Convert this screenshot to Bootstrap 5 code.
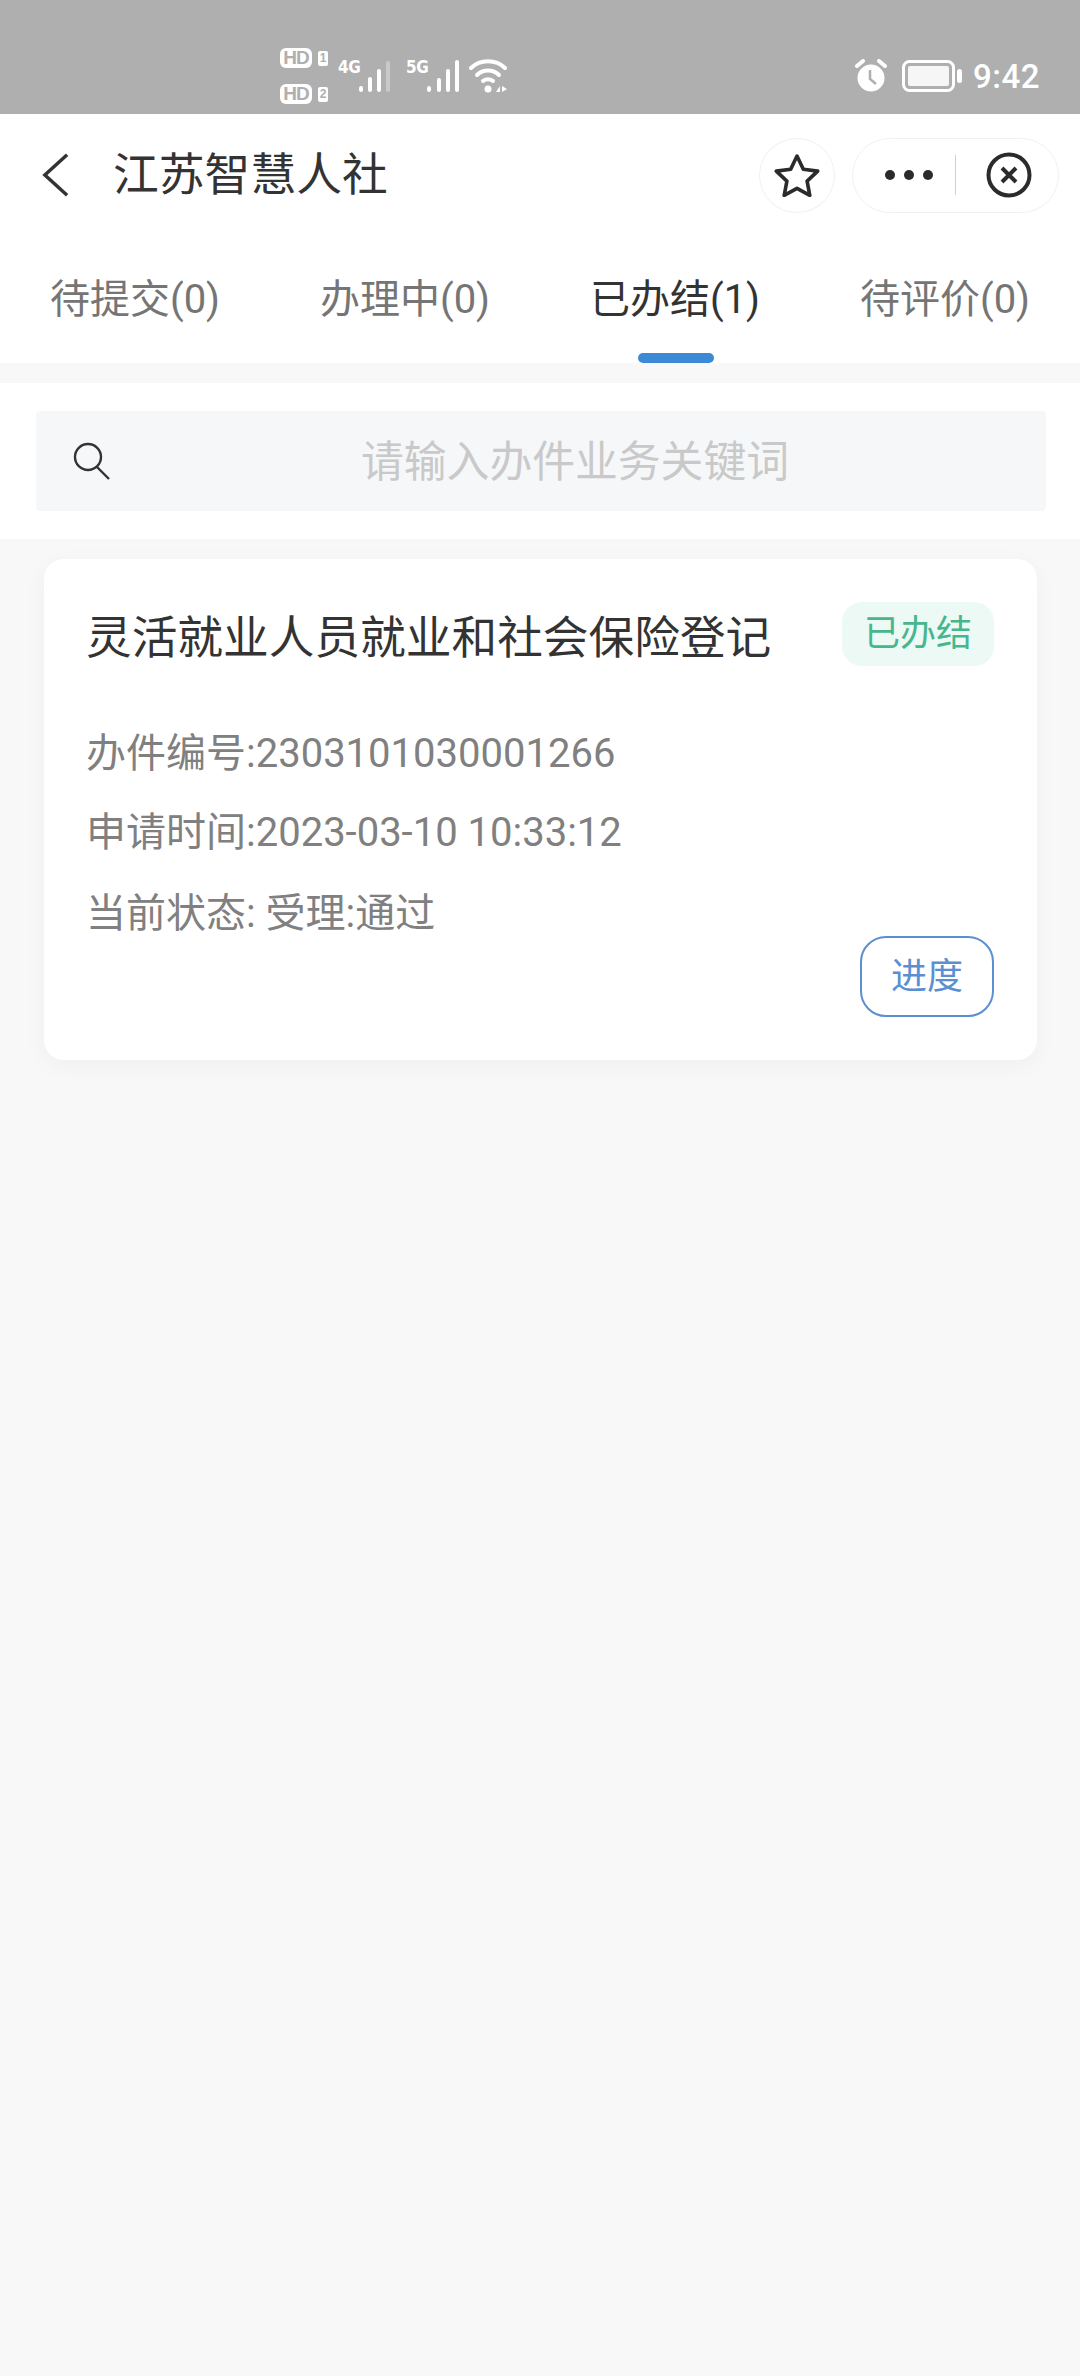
<!DOCTYPE html>
<html lang="zh-CN">
<head>
  <meta charset="UTF-8" />
  <title>江苏智慧人社</title>
  <link href="https://cdn.jsdelivr.net/npm/bootstrap@5.3.0/dist/css/bootstrap.min.css" rel="stylesheet" />
  <style>
    html, body { height: 100%; }
    body { background: #f8f8f8; font-family: Roboto, "Noto Sans CJK SC", sans-serif; color: #333; }
    .status-bar { height: 114px; background: #afafaf; color: #fff; padding: 38px 40px 0 280px; }
    .status-time { font-size: 33px; font-weight: 500; letter-spacing: .5px; line-height: 1; margin-left: 11px; }
    .hd-col { width: 50px; gap: 16px; }
    .hd-row { gap: 6px; height: 20px; }
    .hd-tag { background: #fff; color: #afafaf; border-radius: 6px; width: 32px; height: 20px; font: 700 19px/20px "Liberation Sans", sans-serif; text-align: center; letter-spacing: -1px; }
    .hd-num { background: #fff; color: #afafaf; border-radius: 2px; width: 10px; height: 15px; font: 700 12px/15px "Liberation Sans", sans-serif; text-align: center; }
    .net-tag { font: 700 17px/1 "DejaVu Sans Condensed", "Liberation Sans", sans-serif; margin-bottom: 17px; letter-spacing: -.5px; width: 20px; }
    .net-one { margin-left: 8px; }
    .net-two { margin-left: 15px; }
    .wifi-ico { margin-left: 9px; }
    .alarm-ico { margin-right: 14px; }
    .title-bar { height: 126px; background: #fff; padding: 0 21px 4px 41px; }
    .title-text { font-size: 45.8px; line-height: 1; margin-left: 43px; padding-top: 2px; color: #333; }
    .fav-btn { width: 76px; height: 75px; border: 1px solid #f1f1f1; border-radius: 50%; margin-right: 17px; }
    .capsule { width: 207px; height: 75px; border: 1px solid #f1f1f1; border-radius: 38px; padding-left: 32px; }
    .capsule-line { width: 1px; height: 40px; background: #cfcfcf; margin: 0 30px 0 22px; }
    .tab-bar { height: 123px; background: #fff; }
    .tab-item { flex: 0 0 270px; text-align: center; font-size: 40px; line-height: 1; color: #757575; padding-top: 40px; position: relative; }
    .tab-item.on { color: #333; }
    .tab-item.on::after { content: ""; position: absolute; left: 98px; bottom: 0; width: 76px; height: 10px; border-radius: 5px; background: #3c8ad6; }
    .search-wrap { margin-top: 20px; background: #fff; padding: 28px 34px 28px 36px; height: 156px; }
    .search-box { height: 100px; background: #f6f7f9; padding-left: 37px; border-radius: 4px; }
    .search-hint { font-size: 42.8px; color: #c9c9c9; line-height: 1; padding: 2px 43px 0 36px; }
    .job-card { margin: 20px 43px 0 44px; height: 501px; background: #fff; border-radius: 20px; box-shadow: 0 6px 24px rgba(0,0,0,.04); padding: 43px 43px 0 42px; position: relative; }
    .job-title { font-size: 45.7px; line-height: 64px; color: #333; padding-top: 5px; }
    .done-tag { width: 152px; height: 64px; background: #edf9f4; color: #47b68d; font-size: 36px; line-height: 64px; text-align: center; border-radius: 20px; }
    .job-line { font-size: 40px; line-height: 48px; color: #808080; }
    .job-list { margin-top: 59px; gap: 31px; }
    .job-list .job-line:last-child { margin-top: 2px; }
    .prog-btn { position: absolute; right: 43px; bottom: 43px; width: 134px; height: 81px; border: 2.5px solid #5b8fd2; border-radius: 26px; background: #fff; color: #5b8fd2; font-size: 36px; line-height: 1; padding: 0; }
  </style>
</head>
<body>
  <!-- status bar -->
  <div class="status-bar d-flex align-items-center justify-content-between">
    <div class="d-flex align-items-center">
      <div class="hd-col d-flex flex-column">
        <div class="hd-row d-flex align-items-center"><span class="hd-tag">HD</span><span class="hd-num">1</span></div>
        <div class="hd-row d-flex align-items-center"><span class="hd-tag">HD</span><span class="hd-num">2</span></div>
      </div>
      <div class="net-one d-flex align-items-end">
        <span class="net-tag">4G</span>
        <svg width="33" height="34" viewBox="0 0 33 34"><g fill="none" stroke="#fff" stroke-width="4" stroke-linecap="round"><path d="M3 29v2M12 20v11M21 12v19"/></g><path d="M30 4v27" fill="none" stroke="#c9c9c9" stroke-width="4" stroke-linecap="round"/></svg>
      </div>
      <div class="net-two d-flex align-items-end">
        <span class="net-tag">5G</span>
        <svg width="34" height="34" viewBox="0 0 34 34"><g fill="none" stroke="#fff" stroke-width="4" stroke-linecap="round"><path d="M3 29v2M13 21v10M22 12v19M31 3v28"/></g></svg>
      </div>
      <svg width="40" height="36" viewBox="0 0 40 36" class="wifi-ico"><g fill="none" stroke="#fff" stroke-width="4" stroke-linecap="round"><path d="M2 10C11 1 27 1 36 10"/><path d="M8 17c6-6 16-6 22 0"/><path d="M14 23c3-2 7-2 10 0"/></g><circle cx="19" cy="31" r="3.5" fill="#fff"/><path d="M27 34l4-6v6zM33 28l5 3-5 3z" fill="#fff"/></svg>
    </div>
    <div class="d-flex align-items-center">
      <svg width="34" height="34" viewBox="0 0 34 34" class="alarm-ico"><circle cx="17" cy="19" r="13.5" fill="#fff"/><path d="M16 11v9l6 5" fill="none" stroke="#afafaf" stroke-width="2.5"/><path d="M3 7l6-5M31 7l-6-5" stroke="#fff" stroke-width="4" stroke-linecap="round"/></svg>
      <svg width="60" height="32" viewBox="0 0 60 32"><rect x="1.5" y="1.5" width="50" height="29" rx="6" fill="none" stroke="#fff" stroke-width="3"/><rect x="6" y="6" width="41" height="20" rx="2" fill="#f6f6f6"/><rect x="55" y="9" width="5" height="14" rx="2.5" fill="#fff"/></svg>
      <span class="status-time">9:42</span>
    </div>
  </div>

  <!-- title bar -->
  <div class="title-bar d-flex align-items-center">
    <svg width="29" height="46" viewBox="0 0 30 46"><path d="M27 2L4 23l23 21" fill="none" stroke="#333" stroke-width="3.6"/></svg>
    <div class="title-text flex-grow-1">江苏智慧人社</div>
    <div class="fav-btn d-flex align-items-center justify-content-center">
      <svg width="46" height="44" viewBox="0 0 46 44"><path d="M23 3l6.3 13.2 14.4 1.9-10.6 10 2.7 14.3L23 35.4 10.2 42.4l2.7-14.3-10.6-10 14.4-1.9z" fill="none" stroke="#2b2b2b" stroke-width="3.6" stroke-linejoin="round"/></svg>
    </div>
    <div class="capsule d-flex align-items-center">
      <svg width="48" height="12" viewBox="0 0 48 12"><g fill="#2b2b2b"><circle cx="5" cy="6" r="5"/><circle cx="24" cy="6" r="5"/><circle cx="43" cy="6" r="5"/></g></svg>
      <span class="capsule-line"></span>
      <svg width="46" height="46" viewBox="0 0 46 46"><circle cx="23" cy="23" r="20.5" fill="none" stroke="#2b2b2b" stroke-width="4"/><path d="M16 16l14 14M30 16L16 30" stroke="#2b2b2b" stroke-width="4"/></svg>
    </div>
  </div>

  <!-- tabs -->
  <div class="tab-bar d-flex">
    <div class="tab-item">待提交(0)</div>
    <div class="tab-item">办理中(0)</div>
    <div class="tab-item on">已办结(1)</div>
    <div class="tab-item">待评价(0)</div>
  </div>

  <!-- search -->
  <div class="search-wrap">
    <div class="search-box d-flex align-items-center">
      <svg width="38" height="38" viewBox="0 0 38 38"><circle cx="15" cy="15" r="13" fill="none" stroke="#333" stroke-width="2.4"/><path d="M24 25l12 12" stroke="#333" stroke-width="2.4"/></svg>
      <div class="search-hint flex-grow-1 text-center">请输入办件业务关键词</div>
    </div>
  </div>

  <!-- card -->
  <div class="job-card">
    <div class="d-flex justify-content-between align-items-start">
      <div class="job-title">灵活就业人员就业和社会保险登记</div>
      <div class="done-tag">已办结</div>
    </div>
    <div class="job-list d-flex flex-column">
      <div class="job-line">办件编号:2303101030001266</div>
      <div class="job-line">申请时间:2023-03-10 10:33:12</div>
      <div class="job-line">当前状态: 受理:通过</div>
    </div>
    <button type="button" class="btn prog-btn">进度</button>
  </div>
  <script src="https://cdn.jsdelivr.net/npm/bootstrap@5.3.0/dist/js/bootstrap.bundle.min.js"></script>
</body>
</html>
